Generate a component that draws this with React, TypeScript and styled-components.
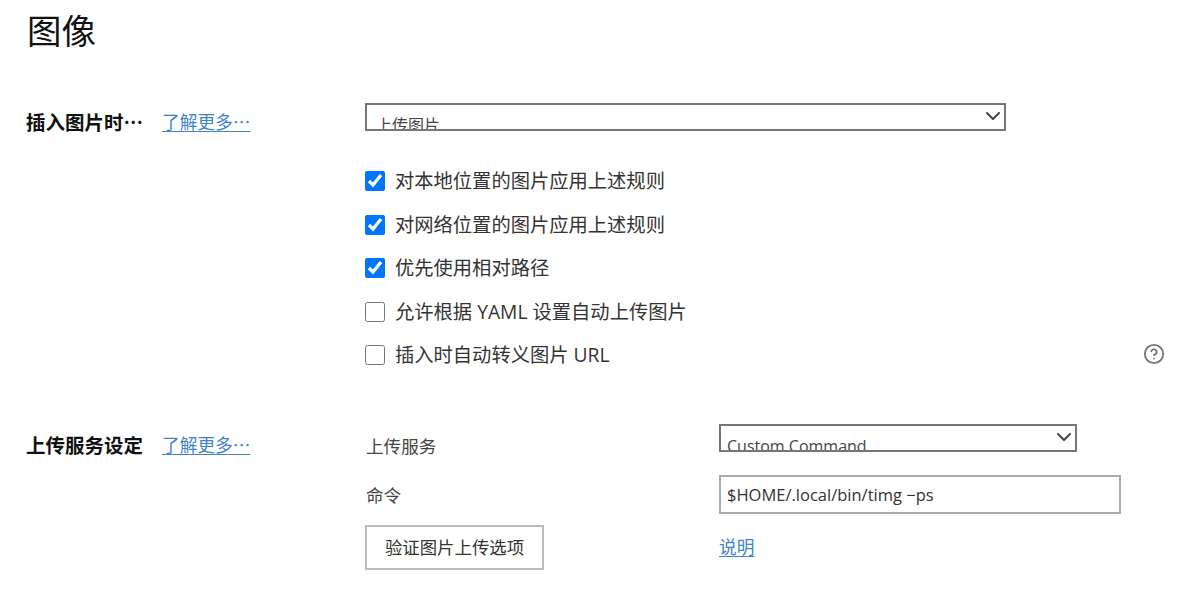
import React from 'react'
import styled, { createGlobalStyle } from 'styled-components'
import { ChevronDown, CircleHelp } from 'lucide-react'

const GlobalStyle = createGlobalStyle`
	html,
	body {
		margin: 0;
		background: #fff;
		color: #333;
		font-family: 'Open Sans', 'Noto Sans CJK SC', sans-serif;
		font-size: 17.6px;
	}
`

const StyledPage = styled.div`
	width: 1182px;
	height: 615px;
	box-sizing: border-box;
	padding: 7px 17px 0 26px;
	overflow: hidden;
`

const StyledTitle = styled.h1`
	margin: 0 0 48px 1px;
	height: 48px;
	font-size: 34.5px;
	font-weight: 400;
	line-height: 48px;
	color: #111;
`

const StyledSection = styled.section<{ $gap: number }>`
	display: grid;
	grid-template-columns: 339px 1fr;
	margin-bottom: ${(props) => props.$gap}px;
`

const StyledHeading = styled.div<{ $top: number }>`
	display: flex;
	align-items: center;
	height: 28px;
	margin-top: ${(props) => props.$top}px;
`

const StyledLabel = styled.span`
	width: 136px;
	padding-top: 1px;
	font-family: 'Noto Sans CJK SC', sans-serif;
	font-size: 19.5px;
	font-weight: 700;
	white-space: nowrap;
	color: #111;
`

const StyledLink = styled.a`
	color: #4083c9;
	font-family: 'Noto Sans CJK SC', sans-serif;
	font-size: 17.7px;
	text-decoration: underline;
	text-underline-offset: 2px;
	text-decoration-thickness: 1px;
	white-space: nowrap;
	cursor: pointer;
`

const StyledSelectWrap = styled.div<{ $width: number }>`
	position: relative;
	width: ${(props) => props.$width}px;
	height: 28px;
`

const StyledSelect = styled.select<{ $pad: number }>`
	appearance: none;
	display: block;
	box-sizing: border-box;
	width: 100%;
	height: 100%;
	margin: 0;
	padding: 8px ${(props) => props.$pad}px 0;
	border: 2px solid #767676;
	border-radius: 0;
	outline: none;
	background: #fff;
	color: #444;
	font: inherit;
	font-size: 16px;
	line-height: 24px;
`

const StyledChevron = styled(ChevronDown)`
	position: absolute;
	top: 1px;
	right: 1px;
	color: #444;
	pointer-events: none;
`

const StyledChecks = styled.div`
	display: flex;
	flex-direction: column;
	gap: 13.5px;
	margin-top: 35px;
`

const StyledCheckRow = styled.label`
	display: flex;
	align-items: center;
	gap: 10px;
	height: 30px;
	font-size: 19.3px;
	color: #333;
`

const StyledCheckText = styled.span`
	padding-bottom: 2px;
`

const StyledCheckbox = styled.input`
	width: 20px;
	height: 20px;
	margin: 0;
	accent-color: #0075ff;
`

const StyledHelp = styled(CircleHelp)`
	margin-left: auto;
	margin-bottom: 2px;
	color: #777;
`

const StyledUploadGrid = styled.div`
	display: grid;
	grid-template-columns: 354px 1fr;
	grid-template-rows: 40px auto auto;
	align-items: center;
	row-gap: 11px;
`

const StyledFieldName = styled.span<{ $drop: number }>`
	padding-top: ${(props) => props.$drop}px;
	padding-left: 1px;
	color: #444;
	font-size: 17.6px;
`

const StyledServiceSelect = styled(StyledSelectWrap)`
	align-self: start;
`

const StyledInput = styled.input`
	box-sizing: border-box;
	width: 402px;
	height: 39px;
	padding: 0 6px;
	border: 2px solid #aaa;
	border-radius: 0;
	outline: none;
	color: #333;
	font: inherit;
	font-size: 16.5px;
`

const StyledButton = styled.button`
	box-sizing: border-box;
	width: 179px;
	height: 45px;
	padding: 0 0 3px;
	border: 2px solid #bbb;
	border-radius: 0;
	background: #fff;
	color: #333;
	font: inherit;
	font-size: 17.4px;
`

const StyledNote = styled.div`
	padding-bottom: 4px;
`

const CHECKS = [
	{ text: '对本地位置的图片应用上述规则', checked: true },
	{ text: '对网络位置的图片应用上述规则', checked: true },
	{ text: '优先使用相对路径', checked: true },
	{ text: '允许根据 YAML 设置自动上传图片', checked: false },
	{ text: '插入时自动转义图片 URL', checked: false, help: true },
]

const App: React.FC = () => {
	return (
		<StyledPage>
			<GlobalStyle />
			<StyledTitle>图像</StyledTitle>

			<StyledSection $gap={54}>
				<StyledHeading $top={4}>
					<StyledLabel>插入图片时…</StyledLabel>
					<StyledLink>了解更多…</StyledLink>
				</StyledHeading>
				<div>
					<StyledSelectWrap $width={641}>
						<StyledSelect $pad={9} defaultValue="upload">
							<option value="upload">上传图片</option>
						</StyledSelect>
						<StyledChevron size={24} strokeWidth={2} />
					</StyledSelectWrap>
					<StyledChecks>
						{CHECKS.map((item) => (
							<StyledCheckRow key={item.text}>
								<StyledCheckbox type="checkbox" defaultChecked={item.checked} />
								<StyledCheckText>{item.text}</StyledCheckText>
								{item.help && <StyledHelp size={22} strokeWidth={2} />}
							</StyledCheckRow>
						))}
					</StyledChecks>
				</div>
			</StyledSection>

			<StyledSection $gap={0}>
				<StyledHeading $top={6}>
					<StyledLabel>上传服务设定</StyledLabel>
					<StyledLink>了解更多…</StyledLink>
				</StyledHeading>
				<StyledUploadGrid>
					<StyledFieldName $drop={2}>上传服务</StyledFieldName>
					<StyledServiceSelect $width={358}>
						<StyledSelect $pad={6} defaultValue="custom">
							<option value="custom">Custom Command</option>
						</StyledSelect>
						<StyledChevron size={24} strokeWidth={2} />
					</StyledServiceSelect>
					<StyledFieldName $drop={0}>命令</StyledFieldName>
					<StyledInput defaultValue="$HOME/.local/bin/timg −ps" />
					<StyledButton>验证图片上传选项</StyledButton>
					<StyledNote>
						<StyledLink>说明</StyledLink>
					</StyledNote>
				</StyledUploadGrid>
			</StyledSection>
		</StyledPage>
	)
}

export default App
